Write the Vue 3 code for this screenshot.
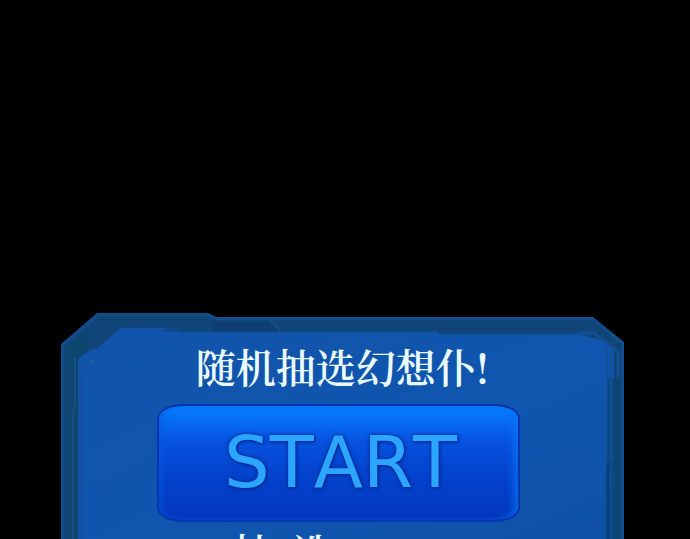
<script setup>
import { ref } from 'vue'

const started = ref(false)
</script>

<template>
  <main class="stage">
    <section class="panel">
      <!-- bevelled frame, stretches with the panel -->
      <svg class="frame" viewBox="0 0 562 260" preserveAspectRatio="none" aria-hidden="true">
        <defs>
          <linearGradient id="face" x1="0" y1="0" x2="1" y2="1">
            <stop offset="0" stop-color="#1153aa" />
            <stop offset="0.55" stop-color="#1056ae" />
            <stop offset="1" stop-color="#0e50a6" />
          </linearGradient>
        </defs>
        <path d="M0 31 L36 0 H147 L155 4 H531 L562 29 V260 H0 Z" fill="#124d8c" />
        <path d="M3 33 L38 3 H146 L154 7 H530 L559 31 V260 H3 Z" fill="#0f4579" />
        <path d="M5 34 L26 16 V260 H5 Z" fill="#0d4770" />
        <path d="M151 9 H210 L219 19 H151 Z" fill="#0e3f74" />
        <path d="M209 8 L221 20" stroke="#15508d" stroke-width="2" />
        <path d="M17 46 L30 36 H36 L59 15 H108 L120 19 H376 V21 H515 L542 28 L552 37 V260 H17 Z" fill="url(#face)" />
        <path d="M17 46 L30 36 H36 L59 15 H108 L120 19 H376 V21 H515" fill="none" stroke="#144d95" />
        <path d="M101 16 H119 V19 H104 Z" fill="#124a91" />
        <path d="M14 44 V90 L12 100 V260" fill="none" stroke="#17507f" stroke-width="2" />
        <path d="M19 46 V260" stroke="#154fa2" stroke-width="3" />
        <path d="M545 65 H559 V260 H549 V151 H545 Z" fill="#0d4a80" />
        <path d="M553 65 H559 V260 H553 Z" fill="#0c4670" />
        <path d="M544 151 L548 148 V260 H544 Z" fill="#0c427b" />
        <path d="M545 37 V64 M549 38 V148" stroke="#144f9b" stroke-width="2" />
        <path d="M515 20 H532 L556 39 V64" fill="none" stroke="#134f95" stroke-width="3" />
        <path d="M1 260 V31 M561 29 V260" stroke="#164d92" stroke-width="2" />
        <rect x="28" y="46" width="5" height="4" fill="#1b5cad" />
      </svg>

      <div class="content">
        <h1 class="title">随机抽选幻想仆!</h1>
        <button class="start" type="button" @click="started = true">START</button>
        <p class="caption">
          <span>抽</span>
          <span>选</span>
        </p>
      </div>
    </section>
  </main>
</template>

<style>
body {
  margin: 0;
  background: #000;
}
</style>

<style scoped>
.stage {
  box-sizing: border-box;
  height: 100vh;
  padding: 313px 66px 0 61px;
  overflow: hidden;
  background: #000;
}

.panel {
  position: relative;
}

.frame {
  position: absolute;
  inset: 0;
  width: 100%;
  height: 100%;
}

.content {
  position: relative;
  padding: 30px 104px 0 96px;
}

.title {
  margin: 0;
  padding-left: 8px;
  color: #e9fbff;
  font-family: "Noto Serif CJK SC", "Noto Sans CJK SC", serif;
  font-size: 40px;
  font-weight: 600;
  line-height: 46px;
  text-align: center;
  white-space: nowrap;
}

.start {
  display: block;
  box-sizing: border-box;
  width: 100%;
  height: 118px;
  margin-top: 15px;
  padding: 0 0 2px 4px;
  border: 2px solid #0635ad;
  border-radius: 26px / 14px;
  color: #2ca5ff;
  font-family: "DejaVu Sans", sans-serif;
  font-size: 72px;
  font-kerning: none;
  line-height: 108px;
  text-shadow: 0 0 4px #032b91, 1px 1px 3px #032b91;
  background: linear-gradient(#0880ff 0, #0768f0 16%, #0652df 32%, #0445cf 55%, #033dc5 80%, #0435ba 100%);
  box-shadow: inset -8px 0 10px -5px #0875f5, inset 4px 0 8px -3px #0759e2;
  cursor: pointer;
}

.caption {
  display: flex;
  gap: 20px;
  margin: 6px 0 0;
  padding-left: 76px;
  color: #e9fbff;
  font-family: "Noto Serif CJK SC", "Noto Sans CJK SC", serif;
  font-size: 40px;
  font-weight: 600;
  line-height: 46px;
}
</style>
